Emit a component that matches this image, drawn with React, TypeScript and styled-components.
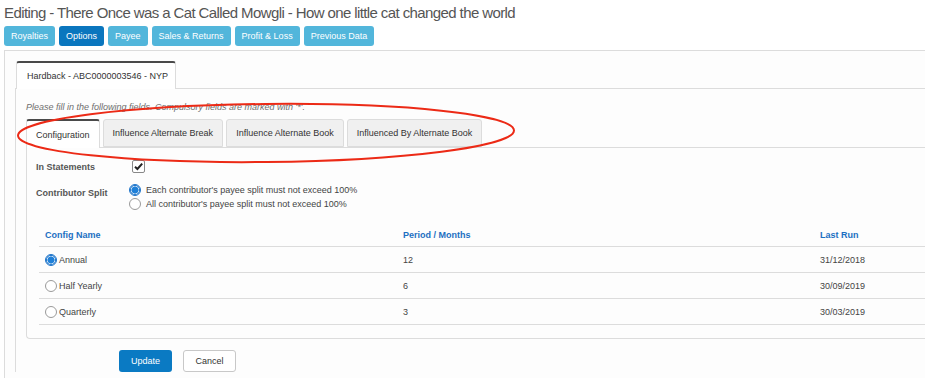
import React from "react";
import styled, { createGlobalStyle } from "styled-components";

const GlobalStyle = createGlobalStyle`
  html, body {
    margin: 0;
    padding: 0;
    background: #ffffff;
    overflow: hidden;
  }
  body {
    font-family: "Liberation Sans", Arial, Helvetica, sans-serif;
    color: #333;
  }
`;

const navItems = [
  { label: "Royalties", active: false },
  { label: "Options", active: true },
  { label: "Payee", active: false },
  { label: "Sales & Returns", active: false },
  { label: "Profit & Loss", active: false },
  { label: "Previous Data", active: false },
];

const innerTabs = [
  "Configuration",
  "Influence Alternate Break",
  "Influence Alternate Book",
  "Influenced By Alternate Book",
];

const configs = [
  { name: "Annual", period: "12", lastRun: "31/12/2018", checked: true },
  { name: "Half Yearly", period: "6", lastRun: "30/09/2019", checked: false },
  { name: "Quarterly", period: "3", lastRun: "30/03/2019", checked: false },
];

const App = () => {
  return (
    <Page>
      <GlobalStyle />
      <Title>
        Editing - There Once was a Cat Called Mowgli - How one little cat changed the world
      </Title>
      <NavRow>
        {navItems.map((n) => (
          <NavButton key={n.label} $active={n.active}>
            {n.label}
          </NavButton>
        ))}
      </NavRow>

      <OuterPanel>
        <TabStrip>
          <Tab>Hardback - ABC0000003546 - NYP</Tab>
        </TabStrip>
        <TabBody>
          <Hint>Please fill in the following fields. Compulsory fields are marked with '*'.</Hint>
          <InnerTabStrip>
            {innerTabs.map((t, i) => (
              <InnerTab key={t} $active={i === 0}>
                {t}
              </InnerTab>
            ))}
          </InnerTabStrip>
          <ConfigPanel>
            <FormRow>
              <FieldLabel>In Statements</FieldLabel>
              <CheckBox>
                <svg width="11" height="9" viewBox="0 0 11 9">
                  <path d="M2 4.8 L4.4 7 L9.2 1.6" fill="none" stroke="#222" strokeWidth="2" />
                </svg>
              </CheckBox>
            </FormRow>
            <SplitRow>
              <FieldLabel $offset>Contributor Split</FieldLabel>
              <RadioGroup>
                <RadioOption>
                  <Radio $checked />
                  Each contributor's payee split must not exceed 100%
                </RadioOption>
                <RadioOption>
                  <Radio />
                  All contributor's payee split must not exceed 100%
                </RadioOption>
              </RadioGroup>
            </SplitRow>

            <Table>
              <HeadRow>
                <HeadCell>Config Name</HeadCell>
                <HeadCell>Period / Months</HeadCell>
                <HeadCell>Last Run</HeadCell>
              </HeadRow>
              {configs.map((c) => (
                <BodyRow key={c.name}>
                  <Cell>
                    <Radio $checked={c.checked} />
                    {c.name}
                  </Cell>
                  <Cell>{c.period}</Cell>
                  <Cell>{c.lastRun}</Cell>
                </BodyRow>
              ))}
            </Table>
          </ConfigPanel>
          <Actions>
            <PrimaryButton>Update</PrimaryButton>
            <DefaultButton>Cancel</DefaultButton>
          </Actions>
        </TabBody>
      </OuterPanel>

      <Annotation width="925" height="378" viewBox="0 0 925 378">
        <ellipse
          cx="266"
          cy="133"
          rx="248"
          ry="29"
          fill="none"
          stroke="#ec2a16"
          strokeWidth="2"
          transform="rotate(-0.6 266 133)"
        />
      </Annotation>
    </Page>
  );
};

export default App;

const Page = styled.div`
  position: relative;
  width: 925px;
  height: 378px;
  overflow: hidden;
`;

const Title = styled.div`
  padding: 3px 0 0 4px;
  font-size: 15px;
  letter-spacing: -0.6px;
  line-height: 20px;
  color: #555;
  white-space: nowrap;
`;

const NavRow = styled.div`
  display: flex;
  gap: 4px;
  margin: 3px 0 0 4px;
`;

const NavButton = styled.div<{ $active?: boolean }>`
  height: 20px;
  padding: 0 7px;
  display: flex;
  align-items: center;
  border-radius: 3px;
  font-size: 9px;
  color: #fff;
  background-color: ${(p) => (p.$active ? "#0a76be" : "#52b6db")};
`;

const OuterPanel = styled.div`
  margin: 4px 0 0 4px;
  border-top: 1px solid #dcdcdc;
  border-left: 1px solid #dcdcdc;
  background: #fdfdfd;
  padding: 10px 0 0 10px;
  height: 400px;
`;

const TabStrip = styled.div`
  display: flex;
  border-bottom: 1px solid #dcdcdc;
  padding-left: 1px;
`;

const Tab = styled.div`
  height: 28px;
  width: 160px;
  box-sizing: border-box;
  padding-left: 10px;
  display: flex;
  align-items: center;
  font-size: 9px;
  color: #333;
  background: #fff;
  border: 1px solid #dcdcdc;
  border-top: 2px solid #4a4a4a;
  border-bottom: none;
  border-radius: 3px 3px 0 0;
  margin-bottom: -1px;
`;

const TabBody = styled.div`
  border-left: 1px solid #dcdcdc;
  padding: 11px 0 0 10px;
`;

const Hint = styled.div`
  font-size: 9px;
  line-height: 14px;
  font-style: italic;
  color: #6f6f6f;
`;

const InnerTabStrip = styled.div`
  display: flex;
  gap: 3px;
  margin-top: 5px;
  border-bottom: 1px solid #dcdcdc;
`;

const InnerTab = styled.div<{ $active?: boolean }>`
  box-sizing: border-box;
  padding: 0 9px;
  display: flex;
  align-items: center;
  font-size: 9px;
  color: #333;
  margin-bottom: -1px;
  border: 1px solid #dcdcdc;
  border-bottom: ${(p) => (p.$active ? "none" : "1px solid #dcdcdc")};
  border-top: ${(p) => (p.$active ? "2px solid #4a4a4a" : "1px solid #dcdcdc")};
  border-radius: 3px 3px 0 0;
  background: ${(p) => (p.$active ? "#fff" : "#f0f0f0")};
  height: ${(p) => (p.$active ? "29px" : "28px")};
`;

const ConfigPanel = styled.div`
  border-left: 1px solid #dcdcdc;
  border-bottom: 1px solid #dcdcdc;
  border-radius: 0 0 0 4px;
  padding: 12px 0 13px 9px;
`;

const FormRow = styled.div`
  display: flex;
  align-items: center;
  height: 13px;
`;

const SplitRow = styled.div`
  display: flex;
  align-items: flex-start;
  margin-top: 11px;
`;

const FieldLabel = styled.div<{ $offset?: boolean }>`
  width: 93px;
  font-size: 9px;
  font-weight: bold;
  color: #555;
  line-height: 14px;
  padding-top: ${(p) => (p.$offset ? "2px" : "0")};
`;

const CheckBox = styled.div`
  width: 13px;
  height: 13px;
  box-sizing: border-box;
  margin-left: 3px;
  border: 1px solid #888;
  border-radius: 2px;
  background: #fff;
  display: flex;
  align-items: center;
  justify-content: center;
`;

const RadioGroup = styled.div`
  display: flex;
  flex-direction: column;
  gap: 2px;
`;

const RadioOption = styled.div`
  display: flex;
  align-items: center;
  height: 12px;
  font-size: 9px;
  color: #444;
  gap: 5px;
`;

const Radio = styled.span<{ $checked?: boolean }>`
  display: inline-block;
  flex: none;
  width: 12px;
  height: 12px;
  box-sizing: border-box;
  border-radius: 50%;
  border: 1px solid ${(p) => (p.$checked ? "#1a72c9" : "#9a9a9a")};
  background: ${(p) =>
    p.$checked
      ? "radial-gradient(circle, #1f80d8 0 3.3px, #ffffff 3.8px)"
      : "#fff"};
  box-shadow: ${(p) => (p.$checked ? "inset 0 0 0 1px #1a72c9" : "none")};
`;

const Table = styled.div`
  margin-top: 14px;
  padding-left: 3px;
`;

const HeadRow = styled.div`
  display: grid;
  grid-template-columns: 358px 417px 1fr;
  height: 23px;
  box-sizing: border-box;
  border-bottom: 1px solid #dcdcdc;
  align-items: center;
`;

const HeadCell = styled.div`
  padding-left: 6px;
  font-size: 9px;
  font-weight: bold;
  color: #1c6fc2;
`;

const BodyRow = styled.div`
  display: grid;
  grid-template-columns: 358px 417px 1fr;
  height: 26px;
  box-sizing: border-box;
  border-bottom: 1px solid #dcdcdc;
  align-items: center;
`;

const Cell = styled.div`
  display: flex;
  align-items: center;
  gap: 2px;
  padding-left: 6px;
  font-size: 9px;
  color: #444;
`;

const Actions = styled.div`
  display: flex;
  gap: 11px;
  margin: 11px 0 0 93px;
`;

const PrimaryButton = styled.div`
  width: 53px;
  height: 22px;
  box-sizing: border-box;
  display: flex;
  align-items: center;
  justify-content: center;
  border-radius: 3px;
  background: #0a7ac3;
  color: #fff;
  font-size: 9px;
`;

const DefaultButton = styled.div`
  width: 53px;
  height: 22px;
  box-sizing: border-box;
  display: flex;
  align-items: center;
  justify-content: center;
  border-radius: 3px;
  background: #fff;
  border: 1px solid #c8c8c8;
  color: #333;
  font-size: 9px;
`;

const Annotation = styled.svg`
  position: absolute;
  left: 0;
  top: 0;
  pointer-events: none;
`;
